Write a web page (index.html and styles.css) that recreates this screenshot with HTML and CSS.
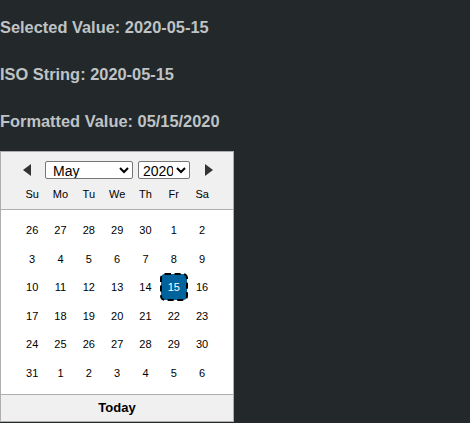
FILE: index.html
```html
<!DOCTYPE html>
<html>
<head>
<meta charset="utf-8">
<link rel="stylesheet" href="styles.css">
</head>
<body>
<div class="info">
  <div class="line">Selected Value: 2020-05-15</div>
  <div class="line">ISO String: 2020-05-15</div>
  <div class="line">Formatted Value: 05/15/2020</div>
</div>
<div class="cal">
  <div class="head">
    <div class="nav">
      <span class="arrow left"></span>
      <select class="sel month"><option>May</option></select>
      <select class="sel year"><option>2020</option></select>
      <span class="arrow right"></span>
    </div>
    <div class="grid names">
      <span>Su</span><span>Mo</span><span>Tu</span><span>We</span><span>Th</span><span>Fr</span><span>Sa</span>
    </div>
  </div>
  <div class="grid days">
    <span>26</span><span>27</span><span>28</span><span>29</span><span>30</span><span>1</span><span>2</span>
    <span>3</span><span>4</span><span>5</span><span>6</span><span>7</span><span>8</span><span>9</span>
    <span>10</span><span>11</span><span>12</span><span>13</span><span>14</span><span class="sel-day">15</span><span>16</span>
    <span>17</span><span>18</span><span>19</span><span>20</span><span>21</span><span>22</span><span>23</span>
    <span>24</span><span>25</span><span>26</span><span>27</span><span>28</span><span>29</span><span>30</span>
    <span>31</span><span>1</span><span>2</span><span>3</span><span>4</span><span>5</span><span>6</span>
  </div>
  <div class="today">Today</div>
</div>
</body>
</html>
```
FILE: styles.css
```css
html, body { margin: 0; padding: 0; }
body {
  background: #23282b;
  font-family: "Liberation Sans", Arial, sans-serif;
  width: 470px;
  height: 423px;
  overflow: hidden;
}
.info {
  display: flex;
  flex-direction: column;
  gap: 27px;
  padding-top: 17px;
}
.line {
  color: #bfc3c5;
  font-weight: bold;
  font-size: 16.4px;
  line-height: 20px;
}
.cal {
  margin-top: 20px;
  width: 232px;
  border: 1px solid #aeaeae;
  background: #fff;
  color: #000;
}
.head {
  background: #f0f0f0;
  border-bottom: 1px solid #aeaeae;
  padding-top: 9px;
  height: 48px;
}
.nav {
  display: flex;
  align-items: center;
  height: 18px;
  padding-left: 22px;
}
.arrow {
  width: 0; height: 0;
  border-top: 6px solid transparent;
  border-bottom: 6px solid transparent;
}
.arrow.left { border-right: 8px solid #333; margin-right: 14px; }
.arrow.right { border-left: 8px solid #333; margin-left: 15px; }
.sel {
  height: 18px;
  font-family: "Liberation Sans", Arial, sans-serif;
  font-size: 14px;
  border: 1px solid #767676;
  border-radius: 2px;
  background: #fff;
  color: #000;
  padding: 0;
}
.month { width: 88px; margin-right: 5px; padding-left: 3px; }
.year { width: 52px; }
.grid {
  display: grid;
  grid-template-columns: repeat(7, 28.33px);
  padding-left: 17px;
  font-size: 11px;
  color: #000;
}
.grid span { text-align: center; }
.names { margin-top: 8px; line-height: 14px; }
.days {
  padding-top: 6px;
  padding-bottom: 7px;
  grid-auto-rows: 28.5px;
  align-items: center;
}
.days span { justify-self: center; width: 26px; height: 26px; line-height: 26px; }
.sel-day {
  background: #00639e;
  color: #fff;
  border-radius: 4px;
  outline: 2px dashed #000;
  outline-offset: -1px;
}
.today {
  background: #f0f0f0;
  border-top: 1px solid #aeaeae;
  text-align: center;
  font-weight: bold;
  font-size: 13px;
  height: 26px;
  line-height: 26px;
}
```
